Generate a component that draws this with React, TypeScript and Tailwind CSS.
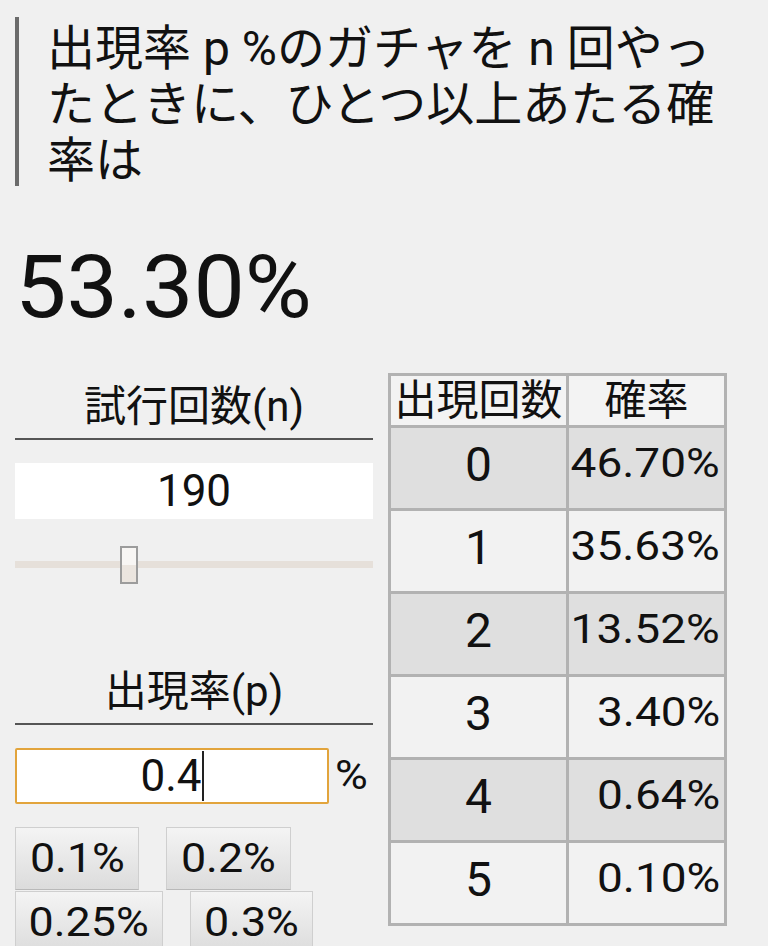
import React from "react";

const rows = [
  { n: "0", p: "46.70%" },
  { n: "1", p: "35.63%" },
  { n: "2", p: "13.52%" },
  { n: "3", p: "3.40%" },
  { n: "4", p: "0.64%" },
  { n: "5", p: "0.10%" },
];

function PctButton({ label, w }: { label: string; w: string }) {
  return (
    <button
      className={`${w} h-[63px] flex items-center justify-center border border-[#cfcfcf] border-b-[#b9b9b9] bg-gradient-to-b from-[#f4f4f4] to-[#dcdcdc] text-[40px] leading-none text-[#111]`}
    >
      <span className="inline-block scale-x-[1.12]">{label}</span>
    </button>
  );
}

export default function App() {
  return (
    <div className="w-[768px] h-[946px] overflow-hidden bg-[#f0f0f0] text-[#111] font-['Roboto','Noto_Sans_CJK_JP',sans-serif]">
      <div className="pt-[17px] pl-[15px]">
        <div className="border-l-4 border-[#6b6b6b] pl-[28px] text-[48px] leading-[56px] pt-[4px] h-[169px]">
          <div className="whitespace-nowrap">出現率 p %のガチャを n 回やっ</div>
          <div className="whitespace-nowrap">たときに、ひとつ以上あたる確</div>
          <div className="whitespace-nowrap">率は</div>
        </div>
      </div>

      <div className="mt-[57px] pl-[15px] text-[88px] leading-[88px]">
        <span className="inline-block scale-x-[1.04] origin-left">53.30%</span>
      </div>

      <div className="mt-[42px] flex gap-[15px] pl-[15px]">
        {/* left column */}
        <div className="w-[358px] flex flex-col">
          <div className="h-[65px] flex items-center justify-center text-[42px] leading-none pt-[2px]">
            試行回数(n)
          </div>
          <div className="h-[2px] bg-[#555]" />
          <div className="mt-[23px] h-[56px] bg-white flex items-center justify-center text-[44px] leading-none">
            190
          </div>
          <div className="relative h-[82px]">
            <div className="mt-[42px] h-[7px] bg-[#e6e0da]" />
            <div className="absolute left-[105px] top-[27px] w-[18px] h-[38px] border-2 border-[#9c9c9c] bg-gradient-to-b from-[#f8f6f4] from-50% to-[#ebe5df] to-50%" />
          </div>
          <div className="mt-[58px] h-[64px] flex items-center justify-center text-[42px] leading-none pt-[2px]">
            出現率(p)
          </div>
          <div className="h-[2px] bg-[#555]" />
          <div className="mt-[23px] flex items-center">
            <div className="w-[314px] h-[56px] bg-white border-2 border-[#e2a43c] rounded-[2px] flex items-center justify-center text-[44px] leading-none">
              <span>0.4</span>
              <span className="inline-block w-[2px] h-[50px] bg-[#222]" />
            </div>
            <span className="ml-[6px] inline-block text-[40px] leading-none scale-x-[1.12] origin-left">%</span>
          </div>
          <div className="mt-[23px] flex flex-wrap gap-x-[27px] gap-y-[1px]">
            <PctButton label="0.1%" w="w-[124px]" />
            <PctButton label="0.2%" w="w-[125px]" />
            <PctButton label="0.25%" w="w-[148px]" />
            <PctButton label="0.3%" w="w-[123px]" />
          </div>
        </div>

        {/* right table */}
        <div className="w-[339px] self-start bg-[#b2b2b2] p-[3px] grid grid-cols-[175px_155px] gap-[3px]">
          <div className="h-[49px] bg-[#f3f3f3] flex items-center justify-center text-[42px] leading-none">
            出現回数
          </div>
          <div className="h-[49px] bg-[#f3f3f3] flex items-center justify-center text-[42px] leading-none">
            確率
          </div>
          {rows.map((r, i) => (
            <React.Fragment key={r.n}>
              <div
                className={`h-[80px] flex items-center justify-center pb-[6px] text-[48px] leading-none ${
                  i % 2 === 0 ? "bg-[#dfdfdf]" : "bg-[#f2f2f2]"
                }`}
              >
                {r.n}
              </div>
              <div
                className={`h-[80px] flex items-center justify-end pb-[8px] pr-[4px] text-[40px] leading-none ${
                  i % 2 === 0 ? "bg-[#dfdfdf]" : "bg-[#f2f2f2]"
                }`}
              >
                <span className="inline-block scale-x-[1.15] origin-right">{r.p}</span>
              </div>
            </React.Fragment>
          ))}
        </div>
      </div>
    </div>
  );
}
